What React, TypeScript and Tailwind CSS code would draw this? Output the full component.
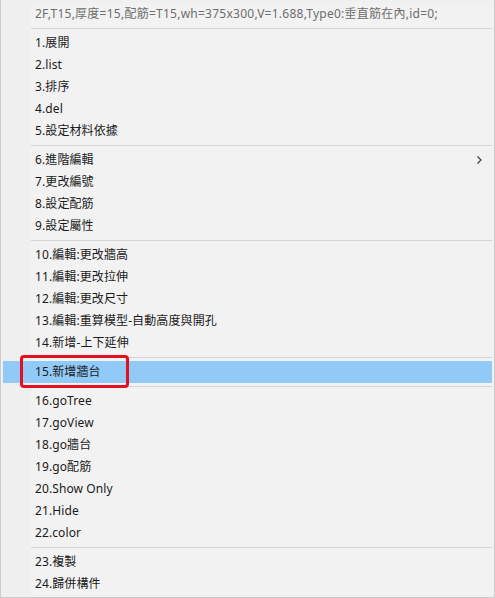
import React from "react";

type Item = { label: string; submenu?: boolean; active?: boolean };

const groups: Item[][] = [
  [
    { label: "1.展開" },
    { label: "2.list" },
    { label: "3.排序" },
    { label: "4.del" },
    { label: "5.設定材料依據" },
  ],
  [
    { label: "6.進階編輯", submenu: true },
    { label: "7.更改編號" },
    { label: "8.設定配筋" },
    { label: "9.設定屬性" },
  ],
  [
    { label: "10.編輯:更改牆高" },
    { label: "11.編輯:更改拉伸" },
    { label: "12.編輯:更改尺寸" },
    { label: "13.編輯:重算模型-自動高度與開孔" },
    { label: "14.新增-上下延伸" },
  ],
  [{ label: "15.新增牆台", active: true }],
  [
    { label: "16.goTree" },
    { label: "17.goView" },
    { label: "18.go牆台" },
    { label: "19.go配筋" },
    { label: "20.Show Only" },
    { label: "21.Hide" },
    { label: "22.color" },
  ],
  [{ label: "23.複製" }, { label: "24.歸併構件" }],
];

const Separator = () => (
  <div className="h-[7px] flex items-center pl-[28px]">
    <div className="h-px w-full bg-[#d4d4d4]" />
  </div>
);

const MenuRow = ({ item }: { item: Item }) => (
  <div
    className={`relative h-[22px] flex items-center pl-[32px] pr-3 ${
      item.active ? "bg-[#91c9f7]" : ""
    }`}
  >
    <span className="text-[12px] text-[#1a1a1a] leading-none tracking-[0.1px]">
      {item.label}
    </span>
    {item.submenu && (
      <svg
        className="absolute right-[10px] top-[7px]"
        width="5"
        height="8"
        viewBox="0 0 5 8"
        fill="none"
      >
        <path d="M0.5 0.5 L4 4 L0.5 7.5" stroke="#333" strokeWidth="1.1" />
      </svg>
    )}
    {item.active && (
      <div className="absolute left-[17px] top-[-6px] w-[109px] h-[33px] border-[3px] border-[#e5101e] rounded-[4px]" />
    )}
  </div>
);

const App: React.FC = () => {
  return (
    <div
      className="w-[495px] h-[598px] bg-white overflow-hidden"
      style={{ fontFamily: '"Noto Sans", "Noto Sans CJK TC", sans-serif' }}
    >
      <div className="h-full border-x border-b border-[#cccccc] bg-[#f0f0f0] pt-[3px] px-[2px] pb-[2px]">
        <div className="h-full bg-[linear-gradient(to_right,#efefef_28px,#f2f2f2_28px)]">
          <div className="h-[22px] flex items-center pl-[32px]">
            <span className="text-[12px] text-[#6d6d6d] leading-none tracking-[0.25px]">
              2F,T15,厚度=15,配筋=T15,wh=375x300,V=1.688,Type0:垂直筋在內,id=0;
            </span>
          </div>
          {groups.map((group, gi) => (
            <React.Fragment key={gi}>
              <Separator />
              {group.map((item) => (
                <MenuRow key={item.label} item={item} />
              ))}
            </React.Fragment>
          ))}
        </div>
      </div>
    </div>
  );
};

export default App;
